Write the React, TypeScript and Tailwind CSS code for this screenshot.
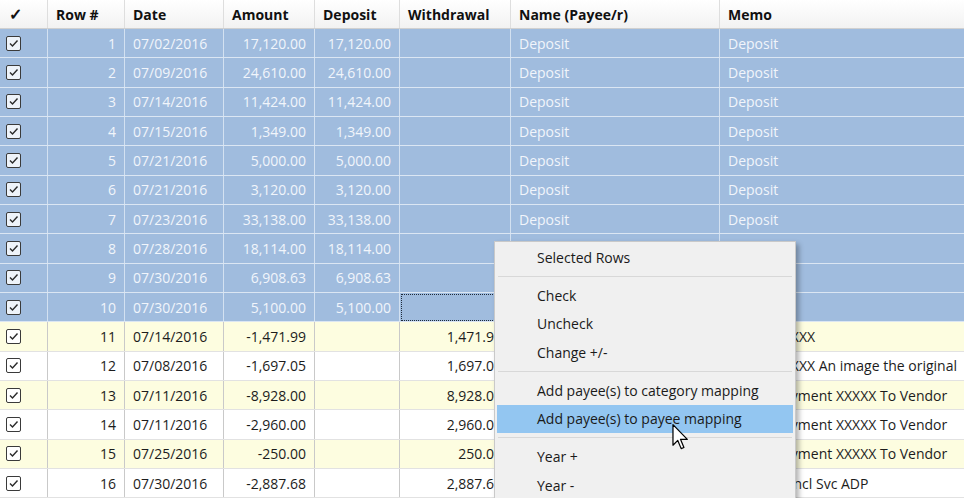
import React from "react";

const widths = [48, 77, 99, 91, 85, 111, 209, 244];

type Row = { n: number; date: string; amt: string; dep: string; wd: string; name: string; memo: string; sel: boolean };

const rows: Row[] = [
  { n: 1, date: "07/02/2016", amt: "17,120.00", dep: "17,120.00", wd: "", name: "Deposit", memo: "Deposit", sel: true },
  { n: 2, date: "07/09/2016", amt: "24,610.00", dep: "24,610.00", wd: "", name: "Deposit", memo: "Deposit", sel: true },
  { n: 3, date: "07/14/2016", amt: "11,424.00", dep: "11,424.00", wd: "", name: "Deposit", memo: "Deposit", sel: true },
  { n: 4, date: "07/15/2016", amt: "1,349.00", dep: "1,349.00", wd: "", name: "Deposit", memo: "Deposit", sel: true },
  { n: 5, date: "07/21/2016", amt: "5,000.00", dep: "5,000.00", wd: "", name: "Deposit", memo: "Deposit", sel: true },
  { n: 6, date: "07/21/2016", amt: "3,120.00", dep: "3,120.00", wd: "", name: "Deposit", memo: "Deposit", sel: true },
  { n: 7, date: "07/23/2016", amt: "33,138.00", dep: "33,138.00", wd: "", name: "Deposit", memo: "Deposit", sel: true },
  { n: 8, date: "07/28/2016", amt: "18,114.00", dep: "18,114.00", wd: "", name: "Deposit", memo: "Deposit", sel: true },
  { n: 9, date: "07/30/2016", amt: "6,908.63", dep: "6,908.63", wd: "", name: "Deposit", memo: "Deposit", sel: true },
  { n: 10, date: "07/30/2016", amt: "5,100.00", dep: "5,100.00", wd: "", name: "Deposit", memo: "Deposit", sel: true },
  { n: 11, date: "07/14/2016", amt: "-1,471.99", dep: "", wd: "1,471.99", name: "Check", memo: "Check: XXXXX", sel: false },
  { n: 12, date: "07/08/2016", amt: "-1,697.05", dep: "", wd: "1,697.05", name: "Check", memo: "Check: XXXXX An image the original", sel: false },
  { n: 13, date: "07/11/2016", amt: "-8,928.00", dep: "", wd: "8,928.00", name: "Vendor", memo: "Online Payment XXXXX To Vendor", sel: false },
  { n: 14, date: "07/11/2016", amt: "-2,960.00", dep: "", wd: "2,960.00", name: "Vendor", memo: "Online Payment XXXXX To Vendor", sel: false },
  { n: 15, date: "07/25/2016", amt: "-250.00", dep: "", wd: "250.00", name: "Vendor", memo: "Online Payment XXXXX To Vendor", sel: false },
  { n: 16, date: "07/30/2016", amt: "-2,887.68", dep: "", wd: "2,887.68", name: "ADP", memo: "Payrolls Fincl Svc ADP", sel: false },
];

function CheckBox({ sel }: { sel: boolean }) {
  return (
    <div className={`w-[15px] h-[15px] rounded-[2px] border-[1.5px] border-[#3a3a3a] flex items-center justify-center ${sel ? "bg-[#eef3f9]" : "bg-white"}`}>
      <svg width="11" height="11" viewBox="0 0 11 11">
        <path d="M2 5.5 L4.5 8 L9.5 2.5" fill="none" stroke="#2a2a2a" strokeWidth="1.4" />
      </svg>
    </div>
  );
}

const headers = ["✓", "Row #", "Date", "Amount", "Deposit", "Withdrawal", "Name (Payee/r)", "Memo"];

function Menu() {
  const Item = ({ label, hl }: { label: string; hl?: boolean }) => (
    <div className={`h-[28.5px] mx-[2px] flex items-center pl-[40px] text-[14px] text-[#1a1a1a] ${hl ? "bg-[#93c6f1]" : ""}`}>{label}</div>
  );
  const Sep = () => (
    <div className="h-[9.5px] mx-[3px] flex items-center">
      <div className="h-px w-full bg-[#d8d8d8]" />
    </div>
  );
  return (
    <div className="absolute left-[494px] top-[241px] w-[302px] h-[270px] bg-[#f0f0f0] border border-[#c9c9c9] py-[1px] shadow-[3px_3px_5px_rgba(0,0,0,0.3)]">
      <Item label="Selected Rows" />
      <Sep />
      <Item label="Check" />
      <Item label="Uncheck" />
      <Item label="Change +/-" />
      <Sep />
      <Item label="Add payee(s) to category mapping" />
      <Item label="Add payee(s) to payee mapping" hl />
      <Sep />
      <Item label="Year +" />
      <Item label="Year -" />
    </div>
  );
}

export default function App() {
  return (
    <div className="relative w-[964px] h-[498px] overflow-hidden bg-white" style={{ fontFamily: '"Open Sans", "Noto Sans", sans-serif' }}>
      <div className="flex h-[29px] bg-gradient-to-b from-white to-[#f2f2f2] border-b border-[#d0d0d0]">
        {headers.map((h, i) => (
          <div key={i} style={{ width: widths[i] }} className={`shrink-0 flex items-center pl-[8px] text-[14px] font-bold text-[#111] ${i < 7 ? "border-r border-[#dedede]" : ""}`}>
            {i === 0 ? <span className="text-[16px] pl-[1px]">✓</span> : h}
          </div>
        ))}
      </div>
      {rows.map((r, idx) => {
        const bg = r.sel ? "bg-[#a0bcde]" : r.n % 2 === 1 ? "bg-[#fdfde0]" : "bg-white";
        const txt = r.sel ? "text-[#f1f5fb]" : "text-[#1c1c1c]";
        const vline = r.sel ? "border-[#d3e1f1]" : "border-[#c9c9c9]";
        const hline = r.sel ? "border-b-[#dbe6f3]" : "border-b-[#e2e2e2]";
        const cells = [r.date, r.amt, r.dep, r.wd, r.name, r.memo];
        return (
          <div key={idx} className={`flex h-[29.33px] border-b ${hline} ${bg} text-[14px] ${txt}`}>
            <div style={{ width: widths[0] }} className={`shrink-0 flex items-center pl-[6px] border-r ${vline}`}>
              <CheckBox sel={r.sel} />
            </div>
            <div style={{ width: widths[1] }} className={`shrink-0 flex items-center justify-end pr-[8px] border-r ${vline}`}>{r.n}</div>
            {cells.map((c, j) => {
              const right = j >= 1 && j <= 3;
              const focus = r.n === 10 && j === 3;
              return (
                <div key={j} style={{ width: widths[j + 2] }} className={`shrink-0 flex items-center whitespace-nowrap overflow-hidden ${right ? "justify-end pr-[8px]" : "pl-[8px]"} ${j < 5 ? `border-r ${vline}` : ""} relative`}>
                  {c}
                  {focus && <div className="absolute inset-x-[1px] top-[1px] bottom-[0px] border border-dotted border-[#1e2a3a]" />}
                </div>
              );
            })}
          </div>
        );
      })}
      <Menu />
      <svg className="absolute left-[672px] top-[424px]" width="17" height="26" viewBox="0 0 12 19">
        <path d="M0.5 0.5 L0.5 15.5 L4 12 L6.5 18 L8.5 17.2 L6 11.2 L11 11.2 Z" fill="white" stroke="black" strokeWidth="0.9" strokeLinejoin="round" />
      </svg>
    </div>
  );
}
